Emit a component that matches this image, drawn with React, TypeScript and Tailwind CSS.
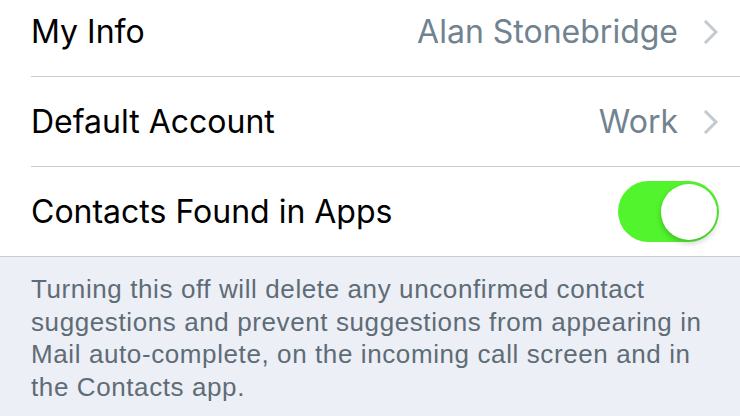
// iOS Contacts settings — rows + footer note
const rowFont = { fontFamily: 'Inter, "Liberation Sans", Arial, sans-serif' };
const noteFont = { fontFamily: '"Liberation Sans", Arial, sans-serif' };

function Chevron() {
  return (
    <svg width="16" height="24" viewBox="0 0 16 24" fill="none" className="shrink-0">
      <path d="M3 2l10 10-10 10" stroke="#c2cad2" strokeWidth="3" strokeLinecap="square" />
    </svg>
  );
}

function Row({ label, value }: { label: string; value?: string }) {
  return (
    <div className="flex h-[90px] pl-[31px]">
      <div className="flex flex-1 items-center pr-[21px] border-b border-[#c8cdd3]">
        <span className="flex-1 text-[32px] text-black">{label}</span>
        {value && (
          <div className="flex items-center gap-[25px]">
            <span className="text-[32px] text-[#718390]">{value}</span>
            <Chevron />
          </div>
        )}
      </div>
    </div>
  );
}

export default function App() {
  return (
    <div className="w-[740px] h-[416px] overflow-hidden bg-[#eceff6]">
      <div className="bg-white -mt-[13px] border-b border-[#c8cdd3]" style={rowFont}>
        <Row label="My Info" value="Alan Stonebridge" />
        <Row label="Default Account" value="Work" />
        <div className="flex h-[89px] items-center pl-[31px] pr-[21px]">
          <span className="flex-1 text-[32px] text-black">Contacts Found in Apps</span>
          {/* toggle, on */}
          <div className="relative w-[101px] h-[61px] rounded-full bg-[#52f42d]">
            <div className="absolute right-[2px] top-[3px] w-[56px] h-[56px] rounded-full bg-white shadow-[0_3px_6px_rgba(0,0,0,0.22)]" />
          </div>
        </div>
      </div>
      <p className="pl-[31px] pr-[28px] pt-[16px] text-[26px] tracking-[0.6px] leading-[32.5px] text-[#5f6c76]" style={noteFont}>
        Turning this off will delete any unconfirmed contact suggestions and prevent suggestions
        from appearing in Mail auto-complete, on the incoming call screen and in the Contacts app.
      </p>
    </div>
  );
}
